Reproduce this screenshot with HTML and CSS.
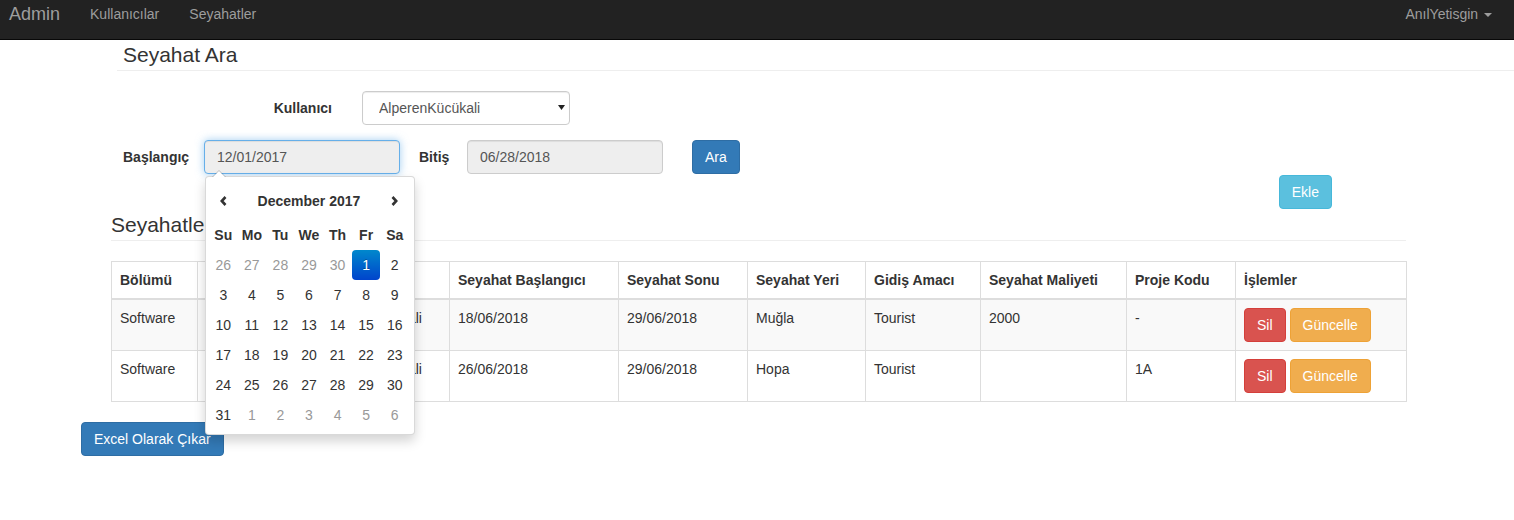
FILE: index.html
```html
<!DOCTYPE html>
<html lang="tr">
<head>
<meta charset="utf-8">
<title>Seyahat Ara</title>
<link rel="stylesheet" href="styles.css">
</head>
<body>
<nav class="navbar">
  <div class="nav-left">
    <a class="brand">Admin</a>
    <a class="nav-link">Kullanıcılar</a>
    <a class="nav-link">Seyahatler</a>
  </div>
  <div class="nav-right">
    <a class="nav-link user">AnılYetisgin <span class="caret"></span></a>
  </div>
</nav>

<section class="search">
  <h3 class="page-title">Seyahat Ara</h3>
  <div class="form-row row-user">
    <label class="lbl lbl-user">Kullanıcı</label>
    <div class="select-wrap">
      <select class="form-select"><option>AlperenKücükali</option></select>
      <svg class="select-arrow" width="7" height="5" viewBox="0 0 7 5"><path d="M0 0H7L3.5 5Z" fill="#222"/></svg>
    </div>
  </div>
  <div class="form-row row-dates">
    <label class="lbl lbl-start">Başlangıç</label>
    <div class="dp-wrap">
      <input class="form-control focused" readonly value="12/01/2017">
      <div class="datepicker">
        <table class="dp-table">
          <thead>
            <tr class="dp-head">
              <th class="dp-nav"><svg width="7" height="10" viewBox="0 0 7 10"><path d="M5.5 1L1.8 5L5.5 9" fill="none" stroke="#333" stroke-width="2.6"/></svg></th>
              <th colspan="5" class="dp-title">December 2017</th>
              <th class="dp-nav"><svg width="7" height="10" viewBox="0 0 7 10"><path d="M1.5 1L5.2 5L1.5 9" fill="none" stroke="#333" stroke-width="2.6"/></svg></th>
            </tr>
            <tr class="dp-dow">
              <th>Su</th><th>Mo</th><th>Tu</th><th>We</th><th>Th</th><th>Fr</th><th>Sa</th>
            </tr>
          </thead>
          <tbody>
            <tr><td class="old">26</td><td class="old">27</td><td class="old">28</td><td class="old">29</td><td class="old">30</td><td class="active">1</td><td>2</td></tr>
            <tr><td>3</td><td>4</td><td>5</td><td>6</td><td>7</td><td>8</td><td>9</td></tr>
            <tr><td>10</td><td>11</td><td>12</td><td>13</td><td>14</td><td>15</td><td>16</td></tr>
            <tr><td>17</td><td>18</td><td>19</td><td>20</td><td>21</td><td>22</td><td>23</td></tr>
            <tr><td>24</td><td>25</td><td>26</td><td>27</td><td>28</td><td>29</td><td>30</td></tr>
            <tr><td>31</td><td class="old">1</td><td class="old">2</td><td class="old">3</td><td class="old">4</td><td class="old">5</td><td class="old">6</td></tr>
          </tbody>
        </table>
      </div>
    </div>
    <label class="lbl lbl-end">Bitiş</label>
    <input class="form-control" readonly value="06/28/2018">
    <button class="btn btn-primary btn-ara">Ara</button>
  </div>
</section>

<section class="list">
  <div class="add-row">
    <button class="btn btn-info">Ekle</button>
  </div>
  <h3 class="list-title">Seyahatler</h3>
  <table class="data-table">
    <colgroup>
      <col class="c1"><col class="c2"><col class="c3"><col class="c4"><col class="c5">
      <col class="c6"><col class="c7"><col class="c8"><col class="c9"><col class="c10">
    </colgroup>
    <thead>
      <tr>
        <th>Bölümü</th><th>Adı</th><th>Soyadı</th><th>Seyahat Başlangıcı</th><th>Seyahat Sonu</th>
        <th>Seyahat Yeri</th><th>Gidiş Amacı</th><th>Seyahat Maliyeti</th><th>Proje Kodu</th><th>İşlemler</th>
      </tr>
    </thead>
    <tbody>
      <tr class="striped">
        <td>Software</td><td>Alperen</td><td>Kücükali</td><td>18/06/2018</td><td>29/06/2018</td>
        <td>Muğla</td><td>Tourist</td><td>2000</td><td>-</td>
        <td><div class="actions"><button class="btn btn-danger">Sil</button><button class="btn btn-warning">Güncelle</button></div></td>
      </tr>
      <tr>
        <td>Software</td><td>Alperen</td><td>Kücükali</td><td>26/06/2018</td><td>29/06/2018</td>
        <td>Hopa</td><td>Tourist</td><td></td><td>1A</td>
        <td><div class="actions"><button class="btn btn-danger">Sil</button><button class="btn btn-warning">Güncelle</button></div></td>
      </tr>
    </tbody>
  </table>
</section>

<div class="export-row">
  <button class="btn btn-primary">Excel Olarak Çıkar</button>
</div>
</body>
</html>
```

FILE: styles.css
```css
* { box-sizing: border-box; }

body {
  margin: 0;
  font-family: "Liberation Sans", Arial, Helvetica, sans-serif;
  font-size: 14px;
  line-height: 20px;
  color: #333;
  background: #fff;
}

/* Navbar */
.navbar {
  display: flex;
  justify-content: space-between;
  height: 40px;
  background: #222;
  border-bottom: 1px solid #080808;
}
.nav-left, .nav-right { display: flex; align-items: flex-start; }
.brand {
  padding: 4px 15px 0 9px;
  font-size: 18px;
  line-height: 20px;
  color: #9d9d9d;
}
.nav-link {
  padding: 4px 15px 0;
  line-height: 20px;
  color: #9d9d9d;
}
.nav-link.user { padding-right: 22px; }
.caret {
  display: inline-block;
  width: 0;
  height: 0;
  margin-left: 2px;
  vertical-align: middle;
  border-top: 4px solid #9d9d9d;
  border-left: 4px solid transparent;
  border-right: 4px solid transparent;
}

/* Search section */
.search { margin-left: 117px; }
.page-title {
  margin: 3px 0 0;
  padding: 0 0 4px 6px;
  font-size: 21px;
  line-height: 23px;
  font-weight: 400;
  border-bottom: 1px solid #eee;
}
.form-row { display: flex; align-items: center; }
.row-user { margin-top: 20px; }
.row-dates { margin-top: 15px; padding-left: 6px; }
.lbl { font-weight: 700; }
.lbl-user { width: 215px; text-align: right; margin-right: 30px; }
.lbl-start { width: 81px; }
.lbl-end { width: 48px; margin-left: 19px; }

.select-wrap { position: relative; width: 208px; height: 34px; }
.form-select {
  appearance: none;
  -webkit-appearance: none;
  width: 100%;
  height: 34px;
  padding: 6px 12px 6px 16px;
  font: inherit;
  color: #555;
  background: #fff;
  border: 1px solid #ccc;
  border-radius: 4px;
  box-shadow: inset 0 1px 1px rgba(0,0,0,.075);
}
.select-arrow { position: absolute; right: 5px; top: 14px; }

.form-control {
  width: 196px;
  height: 34px;
  padding: 6px 12px;
  font: inherit;
  color: #555;
  background: #eee;
  border: 1px solid #ccc;
  border-radius: 4px;
  box-shadow: inset 0 1px 1px rgba(0,0,0,.075);
  outline: none;
}
.form-control.focused {
  border-color: #66afe9;
  box-shadow: inset 0 1px 1px rgba(0,0,0,.075), 0 0 8px rgba(102,175,233,.6);
}
.btn-ara { margin-left: 29px; }

/* Datepicker */
.dp-wrap { position: relative; }
.datepicker {
  position: absolute;
  top: 36px;
  left: 1px;
  z-index: 1000;
  width: 210px;
  padding: 5px 4px 4px 3px;
  background: #fff;
  border: 1px solid rgba(0,0,0,.15);
  border-radius: 4px;
  box-shadow: 0 6px 12px rgba(0,0,0,.175);
}
.datepicker::before {
  content: "";
  position: absolute;
  top: -7px;
  left: 6px;
  border-left: 7px solid transparent;
  border-right: 7px solid transparent;
  border-bottom: 7px solid rgba(0,0,0,.2);
}
.datepicker::after {
  content: "";
  position: absolute;
  top: -6px;
  left: 7px;
  border-left: 6px solid transparent;
  border-right: 6px solid transparent;
  border-bottom: 6px solid #fff;
}
.dp-table {
  width: 200px;
  border-collapse: collapse;
  table-layout: fixed;
}
.dp-table th, .dp-table td {
  padding: 0;
  text-align: center;
  height: 30px;
  border-radius: 4px;
}
.dp-head th { height: 38px; font-weight: 700; }
.dp-nav svg { display: block; margin: 0 auto; }
.dp-dow th { font-weight: 700; }
.dp-table td.old { color: #999; }
.dp-table td.active {
  color: #fff;
  background: linear-gradient(to bottom, #08c, #04c);
  text-shadow: 0 -1px 0 rgba(0,0,0,.25);
}

/* List section */
.list { margin-left: 111px; width: 1295px; }
.add-row {
  display: flex;
  justify-content: flex-end;
  padding-right: 74px;
  margin-top: 1px;
}
.list-title {
  margin: 4px 0 0;
  padding: 0 0 4px;
  font-size: 21px;
  line-height: 23px;
  font-weight: 400;
  border-bottom: 1px solid #eee;
}

.data-table {
  width: 1295px;
  margin-top: 20px;
  border-collapse: collapse;
  table-layout: fixed;
  border: 1px solid #ddd;
}
.c1 { width: 86px; } .c2 { width: 163px; } .c3 { width: 89px; } .c4 { width: 169px; }
.c5 { width: 129px; } .c6 { width: 118px; } .c7 { width: 115px; } .c8 { width: 146px; }
.c9 { width: 109px; } .c10 { width: 171px; }
.data-table th, .data-table td {
  padding: 8px;
  line-height: 20px;
  border: 1px solid #ddd;
  text-align: left;
  vertical-align: top;
}
.data-table thead th {
  vertical-align: bottom;
  border-bottom: 2px solid #ddd;
  font-weight: 700;
}
.data-table tr.striped td { background: #f9f9f9; }
.actions { display: flex; gap: 4px; }

/* Buttons */
.btn {
  display: inline-block;
  padding: 6px 12px;
  font: inherit;
  font-size: 14px;
  line-height: 20px;
  color: #fff;
  border: 1px solid transparent;
  border-radius: 4px;
  white-space: nowrap;
}
.btn-primary { background: #337ab7; border-color: #2e6da4; }
.btn-info { background: #5bc0de; border-color: #46b8da; }
.btn-danger { background: #d9534f; border-color: #d43f3a; }
.btn-warning { background: #f0ad4e; border-color: #eea236; }

.export-row { margin: 20px 0 0 81px; }
```
